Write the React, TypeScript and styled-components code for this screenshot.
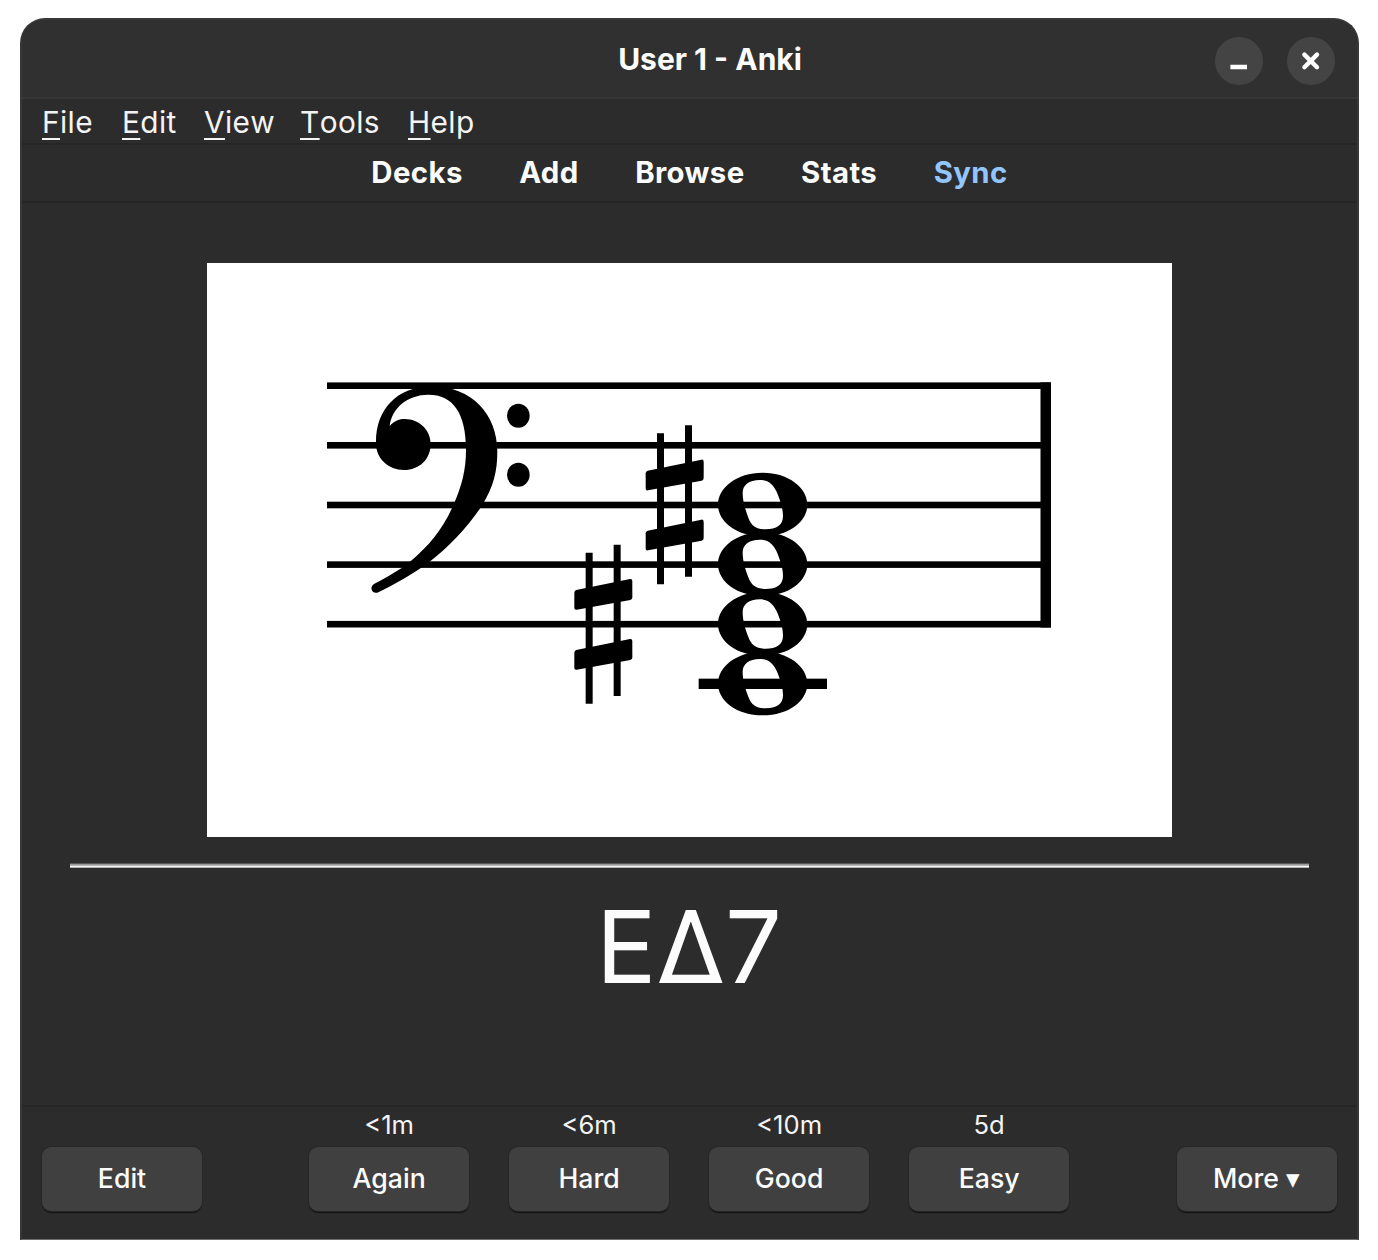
import React from "react";
import styled, { createGlobalStyle } from "styled-components";

const GlobalStyle = createGlobalStyle`
  * { box-sizing: border-box; }
  body { margin: 0; background: #fff; font-family: Inter, "Noto Sans", sans-serif; color: #fcfcfc; }
`;

const Page = styled.div`
  width: 1378px;
  height: 1260px;
  padding: 18px 19px 20px 20px;
  overflow: hidden;
`;

const Window = styled.div`
  width: 1339px;
  height: 1222px;
  display: flex;
  flex-direction: column;
  background: #2c2c2c;
  border: 2px solid #383838;
  border-bottom: 1px solid #6e6e6e;
  border-radius: 25px 25px 0 0;
  overflow: hidden;
`;

const TitleBar = styled.header`
  height: 79px;
  flex: none;
  display: grid;
  grid-template-columns: 1fr auto 1fr;
  align-items: center;
  background: #303030;
  border-bottom: 2px solid #363636;
`;

const Title = styled.h1`
  grid-column: 2;
  margin: 0;
  padding: 1px 0 0 41px;
  font-size: 30px;
  line-height: 36px;
  font-weight: 700;
`;

const Controls = styled.div`
  display: flex;
  justify-content: flex-end;
  gap: 24px;
  padding: 5px 22.5px 0 0;
`;

const RoundButton = styled.button`
  width: 48px;
  height: 48px;
  padding: 0;
  border: 0;
  border-radius: 50%;
  background: #444;
  display: grid;
  place-items: center;
`;

const MenuBar = styled.nav`
  height: 46px;
  flex: none;
  display: flex;
  padding: 5px 0 0 20px;
  border-bottom: 2px solid #262626;
`;

const MenuItem = styled.span<{ $width: number }>`
  width: ${(p) => p.$width}px;
  font-size: 29.8px;
  line-height: 36px;
  font-weight: 400;
  font-kerning: none;
  letter-spacing: 0.4px;
  color: #f4f4f4;
  white-space: nowrap;

  &::first-letter {
    text-decoration: underline 2px;
    text-underline-offset: 4.5px;
    text-decoration-skip-ink: none;
  }
`;

const Toolbar = styled.nav`
  height: 58px;
  flex: none;
  display: flex;
  justify-content: center;
  gap: 56.5px;
  padding-top: 10px;
  border-bottom: 2px solid #262626;
`;

const ToolLink = styled.a<{ $active?: boolean }>`
  font-size: 29.33px;
  line-height: 36px;
  font-weight: 700;
  letter-spacing: 0.4px;
  color: ${(p) => (p.$active ? "#93c5fd" : "#fcfcfc")};
`;

const Card = styled.main`
  flex: 1;
  display: flex;
  flex-direction: column;
  align-items: center;
  padding-top: 60px;
`;

const Score = styled.svg`
  width: 965px;
  height: 574px;
  flex: none;
  display: block;
  background: #fff;
`;

const Divider = styled.hr`
  width: 1239px;
  height: 5px;
  flex: none;
  margin: 26px 0 0;
  border: 0;
  background: linear-gradient(#565656 1px, #9a9a9a 1px 2px, #b4b4b4 2px 3px, #f8f8f8 3px 4px, #b0b0b0 4px);
`;

const Answer = styled.div`
  margin-top: 18px;
  padding-right: 1px;
  font-size: 100.6px;
  line-height: 121px;
  white-space: nowrap;
`;

const BottomBar = styled.footer`
  height: 134px;
  flex: none;
  display: flex;
  justify-content: space-between;
  align-items: flex-start;
  padding: 3px 20.5px 0 20px;
  border-top: 2px solid #272727;
`;

const Ratings = styled.div`
  display: flex;
  gap: 40px;
  margin-right: 0.2px;
`;

const Rating = styled.div`
  display: flex;
  flex-direction: column;
  align-items: center;
`;

const Interval = styled.span`
  height: 37px;
  line-height: 29px;
  font-size: 25.6px;
  color: #f4f4f4;
`;

const Button = styled.button`
  width: 160px;
  height: 64px;
  padding: 0 0 2px;
  border: 0;
  border-radius: 9px;
  background: #404040;
  box-shadow: 0 0 0 1px #262626, 0 2px 1px #111;
  color: #fcfcfc;
  font-family: inherit;
  font-size: 26.67px;
  font-weight: 500;
`;

const menus = [
  { label: "File", width: 80 },
  { label: "Edit", width: 82 },
  { label: "View", width: 96 },
  { label: "Tools", width: 108 },
  { label: "Help", width: 80 },
];

const ratings = [
  { interval: "<1m", label: "Again" },
  { interval: "<6m", label: "Hard" },
  { interval: "<10m", label: "Good" },
  { interval: "5d", label: "Easy" },
];

const staffLines = [385.7, 445.3, 505, 564.6, 624.2];
const noteCenters = [285, 464, 643, 822];

function Sharp({ x, y }: { x: number; y: number }) {
  return (
    <g transform={`translate(${x} ${y})`}>
      <path d="M35 24h21v453H35zM119 0h21v454h-21z" />
      {[0, 180].map((dy) => (
        <path
          key={dy}
          transform={`translate(0 ${dy})`}
          d="M7 136 L168 103 Q175 102 175 109 V158 Q175 164 169 166 L8 195 Q1 196 1 190 V144 Q1 138 7 136Z"
        />
      ))}
    </g>
  );
}

function Chord() {
  return (
    <Score viewBox="207 263 965 574" fill="#000">
      {staffLines.map((y) => (
        <rect key={y} x="327" y={y - 3.3} width="724" height="6.6" />
      ))}
      <rect x="1040.5" y="382.4" width="10.5" height="245.1" />
      <g transform="translate(320 370) scale(.33333)">
        <path d="M168 220C166 120 230 50 330 50C450 46 532 130 532 245C532 305 520 350 487 405C445 470 387 530 327 577C282 610 225 644 172 668C156 672 147 652 162 642C205 618 240 600 270 575C330 525 370 475 400 405C425 350 438 300 438 240C438 130 400 74 325 74C262 74 215 115 209 168C222 152 240 147 254 147C298 147 332 180 332 222C332 268 298 300 252 300C205 300 168 266 168 220Z" />
        <ellipse cx="595" cy="137" rx="34" ry="36" />
        <ellipse cx="595" cy="314" rx="34" ry="36" />
      </g>
      <g transform="translate(560 410) scale(.33333)">
        <Sharp x={256} y={46} />
        <Sharp x={42} y={404} />
        {noteCenters.map((y) => (
          <path
            key={y}
            transform={`translate(608 ${y})`}
            fillRule="evenodd"
            d="M0-97C78-97 134-52 134-1C134 50 78 94 0 94C-78 94-134 50-134-1C-134-52-78-97 0-97ZM-8-75C-42-75-60-59-60-37C-60-10-52 14-43 38C-34 62-20 73 8 73C42 73 61 60 61 34C61 15 56-4 46-30C34-61 18-75-8-75Z"
          />
        ))}
        <rect x="416" y="806" width="385" height="31" />
      </g>
    </Score>
  );
}

export default function App() {
  return (
    <Page>
      <GlobalStyle />
      <Window>
        <TitleBar>
          <Title>User 1 - Anki</Title>
          <Controls>
            <RoundButton aria-label="Minimize">
              <svg width="48" height="48" viewBox="0 0 48 48">
                <path d="M15.4 30H32" stroke="#fff" strokeWidth="4.4" />
              </svg>
            </RoundButton>
            <RoundButton aria-label="Close">
              <svg width="48" height="48" viewBox="0 0 48 48">
                <path d="M17.4 17.6L30 30.2M30 17.6L17.4 30.2" stroke="#fff" strokeWidth="4.4" strokeLinecap="round" />
              </svg>
            </RoundButton>
          </Controls>
        </TitleBar>
        <MenuBar>
          {menus.map((m) => (
            <MenuItem key={m.label} $width={m.width}>{m.label}</MenuItem>
          ))}
        </MenuBar>
        <Toolbar>
          <ToolLink>Decks</ToolLink>
          <ToolLink>Add</ToolLink>
          <ToolLink>Browse</ToolLink>
          <ToolLink>Stats</ToolLink>
          <ToolLink $active>Sync</ToolLink>
        </Toolbar>
        <Card>
          <Chord />
          <Divider />
          <Answer>EΔ7</Answer>
        </Card>
        <BottomBar>
          <Rating>
            <Interval />
            <Button>Edit</Button>
          </Rating>
          <Ratings>
            {ratings.map((r) => (
              <Rating key={r.label}>
                <Interval>{r.interval}</Interval>
                <Button>{r.label}</Button>
              </Rating>
            ))}
          </Ratings>
          <Rating>
            <Interval />
            <Button>More ▾</Button>
          </Rating>
        </BottomBar>
      </Window>
    </Page>
  );
}
